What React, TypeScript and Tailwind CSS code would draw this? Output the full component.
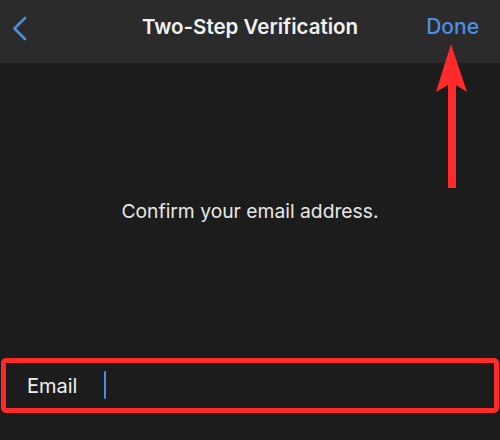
import React from "react";

export default function App() {
  return (
    <div className="relative w-[500px] h-[440px] overflow-hidden bg-[#1c1c1c]" style={{ fontFamily: "Inter, 'Noto Sans', sans-serif" }}>
      <div className="relative h-[63px] bg-[#2b2b2b] flex items-start justify-between pl-[11px] pr-[21px] pt-[14px]">
        <svg width="18" height="26" viewBox="0 0 18 26" className="mt-[2px]">
          <path d="M14 2 L3.5 12.5 L14 23" fill="none" stroke="#4a8fe6" strokeWidth="2.6" strokeLinecap="round" strokeLinejoin="round" />
        </svg>
        <div className="absolute left-0 right-0 top-[14px] flex justify-center pointer-events-none">
          <span className="text-[20.5px] leading-[26px] font-semibold text-[#f2f2f2]">Two-Step Verification</span>
        </div>
        <span className="text-[21px] leading-[26px] font-medium text-[#4a8fe6]">Done</span>
      </div>
      <div className="flex justify-center pt-[136px]">
        <span className="text-[19.3px] leading-[24px] text-[#e8e8e8]">Confirm your email address.</span>
      </div>
      <div className="absolute left-[1px] right-[1px] top-[358px] h-[55px] border-[5px] border-[#ff2a2a] rounded-[5px] flex items-center pl-[21px]">
        <span className="text-[20px] leading-[24px] text-[#f2f2f2] mt-[1px]">Email</span>
        <div className="ml-[27px] w-[2px] h-[28px] bg-[#4a8fe6] rounded-sm mt-[-1px]" />
      </div>
      <svg className="absolute left-[430px] top-[40px]" width="44" height="152" viewBox="0 0 44 152">
        <path d="M21 4 L37 52 L26 45 L26 148 L18 148 L18 45 L6 52 Z" fill="#ff2a2a" />
      </svg>
    </div>
  );
}
